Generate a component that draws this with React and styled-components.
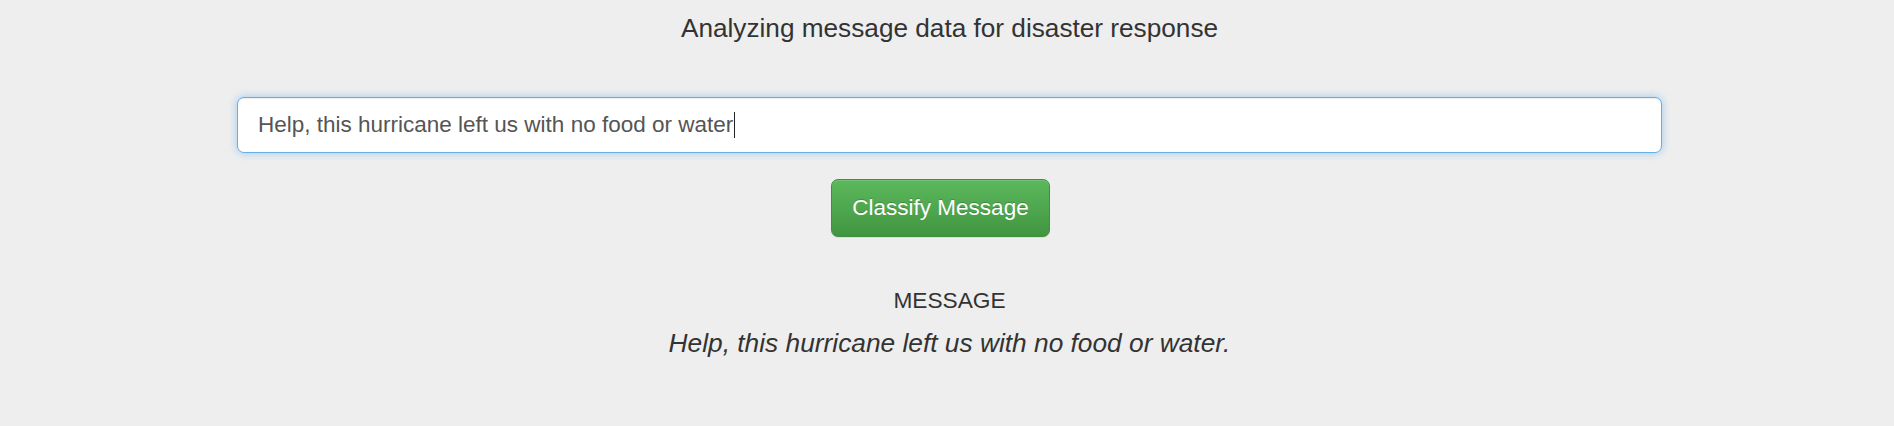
import React from "react";
import styled, { createGlobalStyle } from "styled-components";

const Global = createGlobalStyle`
  html, body { margin: 0; padding: 0; background: #eeeeee; }
  body { font-family: "Liberation Sans", Arial, Helvetica, sans-serif; color: #333333; }
`;

const Page = styled.main`
  width: 1425px;
  margin-left: 237px;
  display: flex;
  flex-direction: column;
  align-items: center;
`;

const Title = styled.h3`
  margin: 13px 0 0;
  font-size: 26.2px;
  font-weight: 400;
  line-height: 31px;
  color: #333333;
`;

const Form = styled.form`
  width: 100%;
  margin-top: 53px;
  display: flex;
  flex-direction: column;
  align-items: center;
`;

const Field = styled.div`
  box-sizing: border-box;
  width: 100%;
  height: 56px;
  padding: 0 20px;
  display: flex;
  align-items: center;
  background: #ffffff;
  border: 1.5px solid #66afe9;
  border-radius: 7px;
  box-shadow: inset 0 1px 1px rgba(0, 0, 0, 0.075), 0 0 9px rgba(102, 175, 233, 0.6);
  font-size: 22.5px;
  color: #555555;
`;

const Caret = styled.span`
  display: inline-block;
  width: 1px;
  height: 26px;
  margin-left: 1px;
  background: #222222;
`;

const Button = styled.button`
  box-sizing: border-box;
  align-self: flex-start;
  margin: 26px 0 0 594px;
  height: 58px;
  width: 219px;
  padding: 0;
  font-family: inherit;
  font-size: 22.5px;
  color: #ffffff;
  text-shadow: 0 -1px 0 rgba(0, 0, 0, 0.2);
  background-image: linear-gradient(to bottom, #5cb85c 0%, #419641 100%);
  border: 1px solid #3e8f3e;
  border-radius: 7px;
  box-shadow: inset 0 1px 0 rgba(255, 255, 255, 0.15), 0 1px 1px rgba(0, 0, 0, 0.075);
  cursor: pointer;
`;

const Result = styled.section`
  margin-top: 50px;
  display: flex;
  flex-direction: column;
  align-items: center;
`;

const Label = styled.h4`
  margin: 0;
  font-size: 22.7px;
  font-weight: 400;
  line-height: 26px;
  color: #333333;
`;

const Quote = styled.p`
  margin: 14px 0 0;
  font-size: 26.3px;
  font-style: italic;
  line-height: 32px;
  color: #333333;
`;

export default function App() {
  return (
    <>
      <Global />
      <Page>
        <Title>Analyzing message data for disaster response</Title>
        <Form onSubmit={(e) => e.preventDefault()}>
          <Field>
            Help, this hurricane left us with no food or water
            <Caret />
          </Field>
          <Button type="submit">Classify Message</Button>
        </Form>
        <Result>
          <Label>MESSAGE</Label>
          <Quote>Help, this hurricane left us with no food or water.</Quote>
        </Result>
      </Page>
    </>
  );
}
